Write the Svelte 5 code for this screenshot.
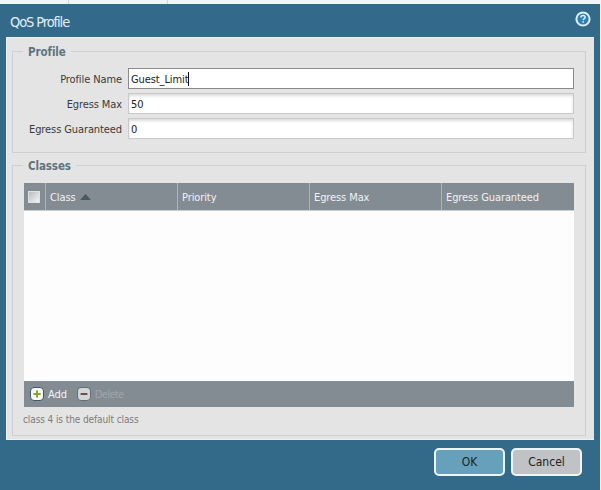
<script>
  const columns = [
    { label: 'Priority' },
    { label: 'Egress Max' },
    { label: 'Egress Guaranteed' }
  ];
  const fields = [
    { label: 'Profile Name', value: 'Guest_Limit', focus: true },
    { label: 'Egress Max', value: '50' },
    { label: 'Egress Guaranteed', value: '0' }
  ];
</script>

<div class="page">
  <div class="strip"><span class="tab a"></span><span class="tab b"></span></div>
  <div class="dialog">
    <header>
      <span class="title">QoS Profile</span>
      <svg class="help" width="16" height="16" viewBox="0 0 16 16">
        <circle cx="8" cy="8" r="6.6" fill="#2f7fb0" stroke="#dcedf6" stroke-width="2" />
        <path d="M5.9 6.4c0-1.3 1-2 2.2-2s2.1.7 2.1 1.8c0 1.5-2 1.5-2 3" fill="none" stroke="#dcedf6" stroke-width="1.5" />
        <rect x="7.4" y="10.2" width="1.5" height="1.5" fill="#dcedf6" />
      </svg>
    </header>
    <div class="panel">
      <fieldset class="profile">
        <legend>Profile</legend>
        {#each fields as f}
          <div class="row">
            <label for={f.label}>{f.label}</label>
            <div class="input" class:focus={f.focus} id={f.label}>{f.value}{#if f.focus}<i class="caret"></i>{/if}</div>
          </div>
        {/each}
      </fieldset>
      <fieldset class="classes">
        <legend>Classes</legend>
        <div class="table">
          <div class="thead">
            <div class="th check"><span class="box"></span></div>
            <div class="th cls">Class <svg width="11" height="6" viewBox="0 0 11 6"><path d="M5.5 0L11 6H0z" fill="#4a5660" /></svg></div>
            {#each columns as c}
              <div class="th">{c.label}</div>
            {/each}
          </div>
          <div class="tbody"></div>
          <div class="tools">
            <span class="tool">
              <svg width="14" height="14" viewBox="0 0 14 14"><rect x=".5" y=".5" width="13" height="13" rx="3.5" fill="#f6f7f2" stroke="#46566e" stroke-width="1" /><path d="M7 3.4v7.2M3.4 7h7.2" stroke="#8aa32c" stroke-width="2" /></svg>
              Add
            </span>
            <span class="tool off">
              <svg width="14" height="14" viewBox="0 0 14 14"><rect x=".5" y=".5" width="13" height="13" rx="3.5" fill="#d3d6d7" stroke="#666d73" stroke-width="1" /><path d="M3.6 7h6.8" stroke="#6d4d4d" stroke-width="2" /></svg>
              Delete
            </span>
          </div>
        </div>
        <p class="note">class 4 is the default class</p>
      </fieldset>
    </div>
    <footer>
      <button class="ok">OK</button>
      <button class="cancel">Cancel</button>
    </footer>
  </div>
</div>

<style>
  :global(body) { margin: 0; background: #f1f4f6; }
  .page {
    width: 601px;
    height: 490px;
    overflow: hidden;
    font-family: "DejaVu Sans Condensed", "DejaVu Sans", sans-serif;
    font-size: 11px;
    letter-spacing: -.1px;
    color: #333;
  }
  .strip { height: 4px; display: flex; }
  .tab { display: block; height: 4px; border-right: 1px solid #d4d8da; }
  .tab.a { width: 68px; }
  .tab.b { width: 98px; }
  .dialog {
    height: 486px;
    width: 600px;
    background: #336a8a;
    display: flex;
    flex-direction: column;
  }
  header {
    height: 33px;
    display: flex;
    align-items: center;
    justify-content: space-between;
    padding: 0 10px;
    flex: none;
  }
  .title { color: #e2eef4; font-size: 14.5px; letter-spacing: -1.1px; margin-top: 3px; }
  .help { margin-right: -1px; margin-top: -3px; }
  .panel {
    margin: 0 6px;
    height: 403px;
    background: #e4e4e4;
    box-sizing: border-box;
    border: 1px solid #edf1f2;
    border-right: 0;
    padding: 6px 8px 0 5px;
    width: 588px;
  }
  fieldset {
    margin: 0;
    padding: 0;
    border: 1px solid #cfd1d1;
    min-width: 0;
    box-sizing: border-box;
  }
  legend {
    margin-left: 10px;
    padding: 1px 5px 0;
    font-size: 11.5px;
    font-weight: bold;
    color: #5f7480;
    line-height: 14px;
  }
  .profile { height: 109px; padding: 7px 11px 0 0; display: flex; flex-direction: column; }
  .row { display: flex; align-items: center; height: 25px; }
  label { width: 109px; text-align: right; color: #3a3a3a; margin-right: 6px; flex: none; padding-top: 2px; }
  .input {
    flex: 1;
    height: 21px;
    box-sizing: border-box;
    background: #fff;
    border: 1px solid #c9c9c9;
    box-shadow: inset 0 2px 3px #dcdcdc;
    padding: 1px 0 0 2px;
    line-height: 19px;
    color: #222;
    display: flex;
    align-items: center;
  }
  .input.focus { border-color: #8a8a8a; box-shadow: none; }
  .caret { display: inline-block; width: 1px; height: 14px; background: #111; margin-left: 0; }
  .classes { height: 278px; margin-top: 5px; padding: 10px 11px 0 0; }
  .table { height: 224px; margin-left: 11px; display: flex; flex-direction: column; }
  .thead { height: 28px; display: flex; background: #848c93; flex: none; border-bottom: 1px solid #c8ced2; box-sizing: border-box; }
  .th {
    width: 132px;
    box-sizing: border-box;
    border-left: 1px solid #aeb4b9;
    color: #f0f2f3;
    padding: 1px 0 0 4px;
    display: flex;
    align-items: center;
    gap: 4px;
    line-height: 1;
  }
  .th.check { width: 21px; border-left: 0; padding: 0 0 0 4px; }
  .th.cls { width: 132px; }
  .box { display: block; width: 10px; height: 10px; background: linear-gradient(135deg, #b8bcc0, #f4f4f4); border: 1px solid #dfe1e3; }
  .tbody { flex: 1; background: #fdfdfd; }
  .tools {
    height: 26px;
    background: #848c93;
    flex: none;
    display: flex;
    align-items: center;
    padding-left: 6px;
    gap: 10px;
  }
  .tool { display: flex; align-items: center; gap: 4px; color: #f2f4f5; }
  .tool.off { color: #9fa5aa; letter-spacing: -.6px; }
  .note { margin: 7px 0 0 10px; font-size: 10px; color: #7c7c7c; line-height: 12px; }
  footer { flex: 1; display: flex; justify-content: flex-end; gap: 6px; padding: 8px 18px 0 0; }
  button {
    width: 71px;
    height: 28px;
    box-sizing: border-box;
    border: 2px solid #eef3f5;
    border-radius: 5px;
    font: inherit;
    font-size: 12px;
    color: #222;
    padding: 0;
  }
  .ok { background: #65a1ba; }
  .cancel { background: #c0c2c6; }
</style>
